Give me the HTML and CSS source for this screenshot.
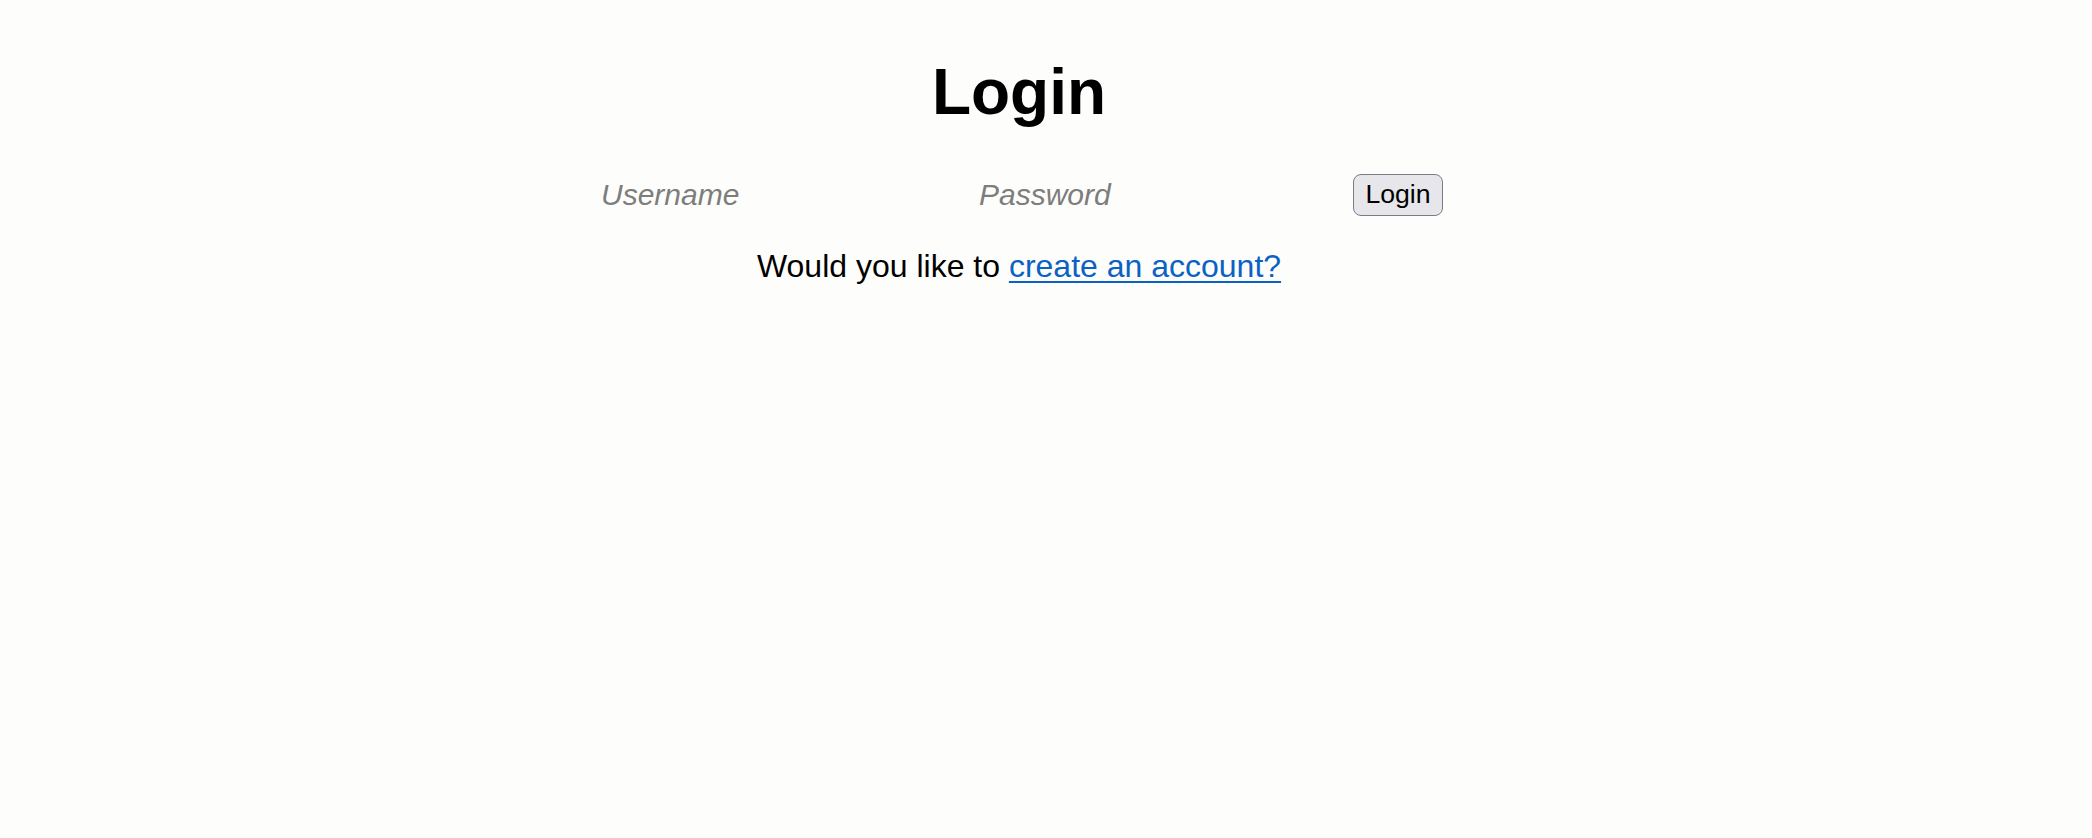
FILE: index.html
```html
<!DOCTYPE html>
<html lang="en">
<head>
<meta charset="utf-8">
<title>Login</title>
<link rel="stylesheet" href="styles.css">
</head>
<body>
<main class="page">
  <h1 class="title">Login</h1>
  <form class="login-form">
    <input class="field field-user" type="text" placeholder="Username">
    <input class="field field-pass" type="password" placeholder="Password">
    <button class="btn" type="button">Login</button>
  </form>
  <p class="signup">Would you like to <a class="signup-link" href="#">create an account?</a></p>
</main>
</body>
</html>
```

FILE: styles.css
```css
html, body {
  margin: 0;
  padding: 0;
  background: #fdfdfb;
}

body {
  font-family: "Liberation Sans", Arial, Helvetica, sans-serif;
  color: #000;
}

.page {
  display: flex;
  flex-direction: column;
  align-items: center;
  padding-right: 54px;
}

.title {
  margin: 55px 0 0;
  font-size: 64px;
  font-weight: 700;
  line-height: normal;
}

.login-form {
  display: flex;
  align-items: center;
  gap: 8px;
  margin-top: 42.5px;
  height: 46px;
}

.field {
  box-sizing: border-box;
  height: 46px;
  padding: 6px 6px;
  border: none;
  background: transparent;
  font-family: "Liberation Sans", Arial, Helvetica, sans-serif;
  font-size: 30px;
  line-height: normal;
  color: #000;
  outline: none;
}

.field-user {
  width: 370px;
}

.field-pass {
  width: 372px;
}

.field::placeholder {
  color: #7d7d7d;
  font-style: italic;
  opacity: 1;
}

.btn {
  box-sizing: border-box;
  width: 90px;
  height: 42px;
  padding: 4px 11px;
  border: 1.5px solid #7b7b84;
  border-radius: 8px;
  background: #e6e6eb;
  font-family: "Liberation Sans", Arial, Helvetica, sans-serif;
  font-size: 26.67px;
  line-height: normal;
  color: #000;
}

.signup {
  margin: 30.5px 0 0;
  font-size: 32px;
  line-height: normal;
}

.signup-link {
  color: #0a62c4;
  text-decoration: underline;
  text-decoration-thickness: 2px;
  text-underline-offset: 4px;
}
```
